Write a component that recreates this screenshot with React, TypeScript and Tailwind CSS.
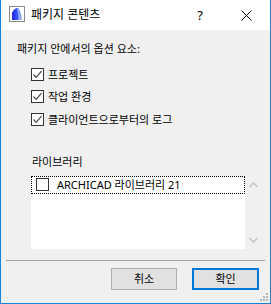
import React from 'react';

const font = { fontFamily: '"Noto Sans", "Noto Sans CJK KR", sans-serif' };

// small checkbox like the Win32 control
const CheckBox: React.FC<{ checked?: boolean }> = ({ checked }) => (
  <div className="w-[13px] h-[13px] border border-[#333333] bg-white flex items-center justify-center shrink-0">
    {checked && (
      <svg width="11" height="11" viewBox="0 0 11 11">
        <path d="M1.5 5.5 L4.2 8.3 L9.5 2.2" fill="none" stroke="#444444" strokeWidth="1.2" />
      </svg>
    )}
  </div>
);

const AppIcon: React.FC = () => (
  <svg width="16" height="16" viewBox="0 0 16 16">
    <defs>
      <linearGradient id="ac" x1="0" y1="0" x2="1" y2="0">
        <stop offset="0" stopColor="#1a22e8" />
        <stop offset="0.55" stopColor="#3a5cff" />
        <stop offset="1" stopColor="#9fb4ff" />
      </linearGradient>
    </defs>
    <rect x="0.5" y="0.5" width="15" height="15" fill="#ffffff" stroke="#8a8a8a" />
    <path d="M3 14 L3 7 Q5 2 9 2 Q12 5 13 14 Z" fill="url(#ac)" />
    <path d="M8 3 Q10 8 10 14 L11.5 14 Q11 7 9 2.5 Z" fill="#b8c8ff" opacity="0.8" />
  </svg>
);

const App: React.FC = () => {
  const options = ['프로젝트', '작업 환경', '클라이언트으로부터의 로그'];

  return (
    <div
      className="w-[271px] h-[304px] bg-[#f0f0f0] border-x border-b border-[#1883d7] flex flex-col text-black"
      style={font}
    >
      {/* Title bar */}
      <div className="h-[30px] bg-white flex items-center shrink-0">
        <div className="ml-2 mt-[-2px]">
          <AppIcon />
        </div>
        <span className="ml-[6px] text-[12px] leading-none">패키지 콘텐츠</span>
        <span className="ml-auto text-[13px] leading-none mr-[38px]">?</span>
        <svg width="11" height="11" viewBox="0 0 11 11" className="mr-[18px]">
          <path d="M0.5 0.5 L10.5 10.5 M10.5 0.5 L0.5 10.5" stroke="#000000" strokeWidth="1" />
        </svg>
      </div>

      {/* Body */}
      <div className="flex flex-col pt-[11px]">
        <div className="pl-4 text-[11px] leading-[16px]">패키지 안에서의 옵션 요소:</div>

        <div className="flex flex-col mt-[6px] pl-[30px]">
          {options.map((o) => (
            <div key={o} className="h-[22.5px] flex items-center gap-[4px]">
              <CheckBox checked />
              <span className="text-[11px] leading-none">{o}</span>
            </div>
          ))}
        </div>

        <div className="mt-[23px] pl-[31px] text-[11px] leading-[16px]">라이브러리</div>

        <div className="mt-[6px] ml-[30px] w-[231px] h-[73px] flex">
          <div className="w-[214px] h-full bg-white">
            <div className="h-[18px] border border-dotted border-black flex items-center pl-[4px]">
              <CheckBox />
              <span className="ml-[8px] text-[11px] leading-none">ARCHICAD 라이브러리 21</span>
            </div>
          </div>
          <div className="w-[17px] h-full flex flex-col items-center justify-between py-[6px]">
            <svg width="9" height="6" viewBox="0 0 9 6">
              <path d="M0.5 5 L4.5 1 L8.5 5" fill="none" stroke="#c4c4c4" strokeWidth="1.5" />
            </svg>
            <svg width="9" height="6" viewBox="0 0 9 6">
              <path d="M0.5 1 L4.5 5 L8.5 1" fill="none" stroke="#c4c4c4" strokeWidth="1.5" />
            </svg>
          </div>
        </div>

        <div className="mt-[11px] mx-[5px] h-px bg-[#a0a0a0]" />

        <div className="mt-[7px] flex justify-end gap-[15px] pr-[11px]">
          <button className="w-[66px] h-[22px] bg-[#e1e1e1] border border-[#adadad] text-[11px] leading-none">
            취소
          </button>
          <button className="w-[67px] h-[22px] bg-[#e1e1e1] border-2 border-[#0078d7] text-[11px] leading-none">
            확인
          </button>
        </div>
      </div>

      {/* resize grip */}
      <div className="mt-auto self-end mr-[2px] mb-[2px] grid grid-cols-3 gap-px w-[8px]">
        <span className="w-[2px] h-[2px]" />
        <span className="w-[2px] h-[2px]" />
        <span className="w-[2px] h-[2px] bg-[#b8b8b8]" />
        <span className="w-[2px] h-[2px]" />
        <span className="w-[2px] h-[2px] bg-[#b8b8b8]" />
        <span className="w-[2px] h-[2px] bg-[#b8b8b8]" />
        <span className="w-[2px] h-[2px] bg-[#b8b8b8]" />
        <span className="w-[2px] h-[2px] bg-[#b8b8b8]" />
        <span className="w-[2px] h-[2px] bg-[#b8b8b8]" />
      </div>
    </div>
  );
};

export default App;
